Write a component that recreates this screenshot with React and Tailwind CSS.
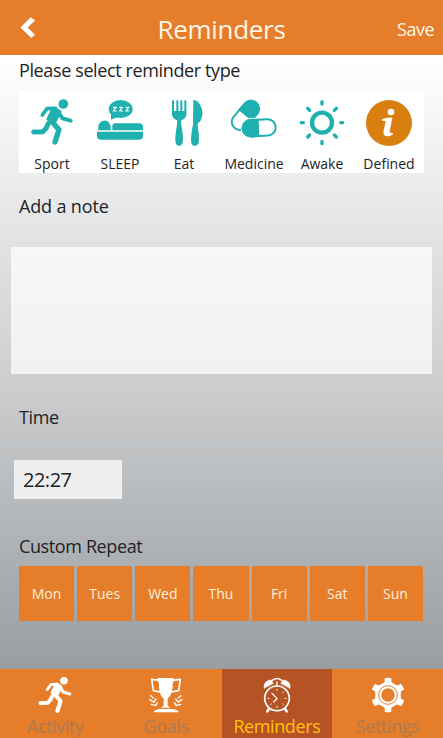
import React, { useState } from "react";

const Runner = ({ className }) => (
  <svg viewBox="38 41 144 144" className={className} fill="none" stroke="currentColor" strokeLinecap="round" strokeLinejoin="round">
    <circle cx="144" cy="59" r="14.5" fill="currentColor" stroke="none" />
    <path d="M81 92 L95 73 L120 72" strokeWidth="11" />
    <path d="M127 79 L141 102 L166 109" strokeWidth="12" />
    <path d="M114 72 L134 82 L119 112 L98 104 Z" fill="currentColor" strokeWidth="9" />
    <path d="M99 118 L92 132 L83 142 L55 143" strokeWidth="15" />
    <path d="M108 110 L131 136 L119 173" strokeWidth="16" />
  </svg>
);

const Sleep = ({ className }) => (
  <svg viewBox="243 39 144 144" className={className} fill="currentColor">
    <ellipse cx="317" cy="72" rx="36" ry="27" />
    <path d="M288 86 L288 104 L308 96 Z" />
    <g fill="none" stroke="white" strokeWidth="3.5">
      <path d="M294 67 h9 l-8 11 h10" />
      <path d="M313 67 h9 l-8 11 h10" />
      <path d="M332 67 h9 l-8 11 h10" />
    </g>
    <path d="M250 136 V126 A18 19 0 0 1 287 126 V136 Z" />
    <path d="M292 136 V124 Q292 115 301 115 H372 Q384 115 384 127 V136 Z" />
    <path d="M246 140 H384 V152 Q384 164 372 164 H258 Q246 164 246 152 Z" />
  </svg>
);

const Eat = ({ className }) => (
  <svg viewBox="39 39 144 144" className={className} fill="currentColor">
    <path d="M66 48 Q69 42 72 48 V78 H79 V48 Q82 42 85 48 V78 H91 V48 Q94 42 97 48 V78 H103 V48 Q106 42 109 48 V88 Q109 100 94 106 Q92 112 96 132 Q101 160 98 174 Q94 183 87 183 Q80 183 77 174 Q74 160 79 132 Q83 112 81 106 Q66 100 66 88 Z" />
    <path d="M130 44 Q146 45 155 70 Q161 90 151 109 Q142 114 143 122 Q149 160 146 174 Q142 183 135 183 Q127 183 124 174 Q121 160 129 118 Z" />
  </svg>
);

const Medicine = ({ className }) => (
  <svg viewBox="243 39 144 144" className={className}>
    <g transform="rotate(-50 289 91)">
      <rect x="239" y="67" width="100" height="48" rx="24" fill="white" stroke="currentColor" strokeWidth="6" />
      <path d="M288 64 H315 A27 27 0 0 1 315 118 H288 Z" fill="currentColor" />
    </g>
    <g transform="rotate(-3 330 129)">
      <rect x="275" y="98" width="109" height="61" rx="30" fill="white" />
      <rect x="281" y="104" width="99" height="49" rx="24.5" fill="white" stroke="currentColor" strokeWidth="6" />
      <path d="M330 101 H305 A27.5 27.5 0 0 0 305 156 H330 Z" fill="currentColor" />
    </g>
  </svg>
);

const Awake = ({ className }) => (
  <svg viewBox="40 39 144 144" className={className} fill="none" stroke="currentColor" strokeLinecap="round">
    <circle cx="112" cy="113" r="30" strokeWidth="13" />
    <path d="M112 50 V57 M112 169 V176 M50 113 H56 M168 113 H174 M69 70 L75 76 M149 150 L155 156 M69 156 L75 150 M149 76 L155 70" strokeWidth="10" />
  </svg>
);

const Defined = ({ className }) => (
  <svg viewBox="241 39 144 144" className={className}>
    <circle cx="313" cy="114" r="69" fill="#d97f10" />
    <circle cx="319" cy="81" r="10" fill="white" />
    <path d="M292 103 Q307 96 323 98 L315 139 Q314 146 325 144 L324 149 Q312 155 303 153 Q294 150 297 138 L303 108 L292 107 Z" fill="white" />
  </svg>
);

const Trophy = ({ className }) => (
  <svg viewBox="441 32 114 114" className={className} fill="none" stroke="currentColor">
    <path d="M477 45 L455 42 L460 76 L482 80 M517 45 L541 42 L536 76 L513 80" strokeWidth="5" strokeLinejoin="round" />
    <path d="M473 38 H521 V49 H519 Q518 89 503 100 V121 L512 127 H483 L491 121 V100 Q476 89 476 49 H473 Z" fill="currentColor" stroke="none" />
    <path d="M462 141 V136 L475 131 H520 L535 136 V141 Z" fill="currentColor" stroke="none" />
    <path d="M452 91 L460 98 M449 103 L459 109 M454 117 L468 121 M468 101 L461 111 M472 112 L467 121 M543 91 L535 98 M546 103 L536 109 M542 117 L528 121 M527 101 L535 111 M523 112 L529 121" strokeWidth="4" strokeLinecap="round" />
  </svg>
);

const Alarm = ({ className }) => (
  <svg viewBox="111 32 114 114" className={className} fill="none" stroke="currentColor" strokeLinecap="round">
    <circle cx="168" cy="99" r="37" strokeWidth="5" />
    <path d="M129 68 Q127 46 151 44 L156 54 Z M180 54 L185 44 Q210 46 207 68 Z" fill="currentColor" strokeWidth="2" />
    <path d="M154 45 Q168 34 182 45 M168 50 V62" strokeWidth="4" />
    <path d="M144 130 L139 138 M192 130 L197 138" strokeWidth="8" />
    <path d="M153 84 L168 100 L158 110" strokeWidth="4" />
    <path d="M168 72 V75 M168 123 V126 M141 99 H144 M192 99 H195 M187 80 L185 82 M187 118 L185 116 M149 118 L151 116" strokeWidth="3" />
  </svg>
);

const Gear = ({ className }) => (
  <svg viewBox="442 32 114 114" className={className} fill="currentColor">
    <circle cx="499" cy="89" r="38" />
    {[0, 60, 120, 180, 240, 300].map((angle) => (
      <path key={angle} d="M482 56 L489 50 V39 Q499 36 509 39 V50 L516 56 Z" transform={`rotate(${angle} 499 89)`} />
    ))}
    <circle cx="499" cy="89" r="28" fill="none" stroke="#e67d2a" strokeWidth="3" />
    <circle cx="499" cy="89" r="20" fill="#e67d2a" />
  </svg>
);

const types = [
  { name: "Sport", Icon: Runner, cell: "w-[66px]" },
  { name: "SLEEP", Icon: Sleep, cell: "w-[70px]" },
  { name: "Eat", Icon: Eat, cell: "w-[58px]", shift: "ml-[6px]" },
  { name: "Medicine", Icon: Medicine, cell: "w-[82px]" },
  { name: "Awake", Icon: Awake, cell: "w-[54px]" },
  { name: "Defined", Icon: Defined, cell: "w-[80px]" },
];

const days = ["Mon", "Tues", "Wed", "Thu", "Fri", "Sat", "Sun"];

const tabs = [
  { name: "Activity", Icon: Runner },
  { name: "Goals", Icon: Trophy },
  { name: "Reminders", Icon: Alarm },
  { name: "Settings", Icon: Gear },
];

export default function App() {
  const [note, setNote] = useState("");
  const [time, setTime] = useState("22:27");
  const [activeTab, setActiveTab] = useState("Reminders");

  return (
    <div className="flex h-[738px] w-[443px] flex-col overflow-hidden bg-linear-to-b from-white from-8% via-[#c9cbcd] via-54% to-[#989c9e] to-92% font-['Open_Sans','Noto_Sans',sans-serif] text-[#222226]">
      <header className="grid h-[55px] shrink-0 grid-cols-[100px_1fr_100px] items-center bg-[#e67d2a] text-[#fff6e8]">
        <button className="pl-5">
          <svg viewBox="60 50 48 64" className="h-[21px] w-4" fill="white">
            <path d="M92 51 L106 61 L83 82 L105 104 L94 114 L61 82 Z" />
          </svg>
        </button>
        <h1 className="pt-0.5 text-center text-[26px] leading-8 tracking-[-0.3px]">Reminders</h1>
        <button className="pt-1 pr-[9px] text-right text-[18px] tracking-[-0.5px]">Save</button>
      </header>

      <main className="flex flex-1 flex-col">
        <p className="mt-[3px] pl-[19px] text-[18px] leading-6 tracking-[-0.38px]">Please select reminder type</p>

        <div className="mt-[9px] ml-[19px] flex h-[82px] w-[405px] bg-white pt-[7px] text-[#1fb0b0]">
          {types.map(({ name, Icon, cell, shift }) => (
            <button key={name} className={`flex shrink-0 flex-col items-center ${cell}`}>
              <Icon className={`size-12 shrink-0 ${shift || ""}`} />
              <span className="mt-2 text-[14px] leading-5 text-[#222226]">{name}</span>
            </button>
          ))}
        </div>

        <label htmlFor="note" className="mt-[21px] pl-[19px] text-[18px] leading-6 tracking-[-0.15px]">
          Add a note
        </label>
        <textarea
          id="note"
          value={note}
          onChange={(e) => setNote(e.target.value)}
          className="mt-[29px] ml-[11px] h-[127px] w-[421px] resize-none bg-linear-to-b from-[#f7f7f7] to-[#f1f1f1] p-2 text-[18px] outline-none"
        />

        <label htmlFor="time" className="mt-[31px] pl-[19px] text-[18px] leading-6 tracking-[-0.4px]">
          Time
        </label>
        <input
          id="time"
          value={time}
          onChange={(e) => setTime(e.target.value)}
          className="mt-[31px] ml-[14px] h-[39px] w-[108px] bg-[#efefef] px-[9px] text-[20px] tracking-[-0.5px] outline-none"
        />

        <p className="mt-[35px] pl-[19px] text-[18px] leading-6 tracking-[-0.38px]">Custom Repeat</p>
        <div className="mt-2 ml-[19px] grid h-[55px] w-[404px] grid-cols-7 gap-[3px]">
          {days.map((day) => (
            <button key={day} className="bg-[#e67d2a] text-[14px] text-[#fff0dc]">
              {day}
            </button>
          ))}
        </div>
      </main>

      <nav className="grid h-[69px] shrink-0 grid-cols-4 bg-[#e67d2a]">
        {tabs.map(({ name, Icon }) => (
          <button
            key={name}
            onClick={() => setActiveTab(name)}
            className={`flex flex-col items-center pt-[7px] ${
              activeTab === name ? "bg-[#b65325] text-[#ffc20e]" : "text-[#ab7b52]"
            }`}
          >
            <Icon className="size-[38px] shrink-0 text-white" />
            <span className="text-[18px] leading-6 tracking-[-0.4px]">{name}</span>
          </button>
        ))}
      </nav>
    </div>
  );
}
